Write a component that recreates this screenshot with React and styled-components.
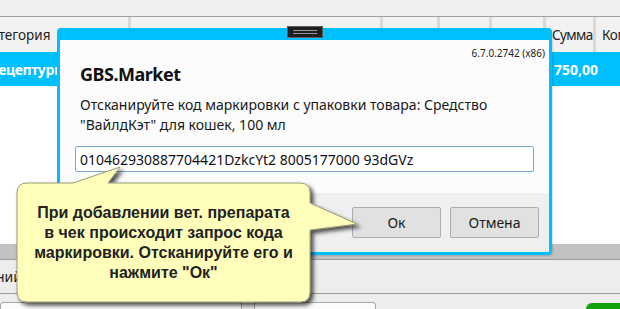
import styled, { createGlobalStyle } from "styled-components";

const GlobalStyle = createGlobalStyle`
  html, body {
    margin: 0;
    padding: 0;
    overflow: hidden;
  }
  body {
    font-family: "Noto Sans", "Open Sans", sans-serif;
  }
`;

const Screen = styled.div`
  position: relative;
  width: 620px;
  height: 309px;
  display: flex;
  flex-direction: column;
  background: #ffffff;
  overflow: hidden;
  font-family: "Noto Sans", sans-serif;
`;

const TopBar = styled.div`
  height: 16px;
  background: #f0f0f0;
  border-bottom: 1px solid #a0a0a0;
`;

const Row = styled.div`
  display: flex;
  height: ${(p) => p.$h}px;
  background: ${(p) => p.$bg};
  color: ${(p) => p.$color};
  font-weight: ${(p) => (p.$bold ? 700 : 400)};
  font-size: ${(p) => p.$size || 14}px;
`;

const Cell = styled.div`
  width: ${(p) => p.$w}px;
  flex: ${(p) => (p.$grow ? 1 : "none")};
  display: flex;
  align-items: center;
  overflow: hidden;
  white-space: nowrap;
  padding-left: ${(p) => p.$pad || 0}px;
  box-sizing: border-box;
  border-right: ${(p) => (p.$divider ? "3px solid #d9d9d9" : "none")};
`;

const Shift = styled.span`
  margin-left: ${(p) => p.$x}px;
  letter-spacing: ${(p) => p.$ls || 0}px;
`;

const Empty = styled.div`
  flex: 1;
  background: #ffffff;
`;

const Splitter = styled.div`
  height: 15px;
  background: #c2c2c2;
  border-bottom: 1px solid #9a9a9a;
`;

const BottomPanel = styled.div`
  height: 33px;
  background: #ededed;
  border-bottom: 1px solid #9c9c9c;
  display: flex;
  align-items: center;
  font-size: 14px;
  color: #222;
`;

const BottomBar = styled.div`
  flex: none;
  height: 15px;
  background: #ededed;
  display: flex;
  align-items: flex-end;
  gap: 12px;
`;

const Field = styled.div`
  height: 6px;
  width: ${(p) => p.$w}px;
  background: #fbfbfb;
  border: 1px solid #a8a8a8;
  border-bottom: none;
  border-radius: 4px 4px 0 0;
`;

const GreenBtn = styled.div`
  margin-left: auto;
  width: 34px;
  height: 6px;
  background: #13a10e;
  border-radius: 6px 0 0 0;
`;

/* modal dialog */
const Dialog = styled.div`
  position: absolute;
  left: 57px;
  top: 28px;
  width: 489px;
  height: 212px;
  border: 3px solid #00bfff;
  border-top-width: 12px;
  border-radius: 4px;
  background: #fcfcfc;
  display: flex;
  flex-direction: column;
  box-shadow: 1px 1px 2px rgba(0, 0, 0, 0.15);
`;

const Handle = styled.div`
  position: absolute;
  left: 227px;
  top: -14px;
  width: 34px;
  height: 10px;
  background: #1e1e1e;
  border: 1px solid #5c5c5c;
  display: flex;
  flex-direction: column;
  justify-content: center;
  align-items: center;
  gap: 2px;
`;

const HandleLine = styled.div`
  width: 24px;
  height: 1px;
  background: #9a9a9a;
`;

const DialogBody = styled.div`
  flex: 1;
  padding: 6px 4px 0 15px;
  display: flex;
  flex-direction: column;
`;

const Version = styled.div`
  align-self: flex-end;
  font-size: 10px;
  line-height: 14px;
  color: #222;
`;

const Title = styled.div`
  margin: 1px 0 0 5px;
  font-size: 18px;
  line-height: 26px;
  letter-spacing: -0.5px;
  font-weight: 700;
  color: #111;
`;

const Message = styled.div`
  margin: 8px 0 0 5px;
  font-size: 14px;
  line-height: 20px;
  color: #1a1a1a;
`;

const CodeInput = styled.div`
  margin-top: 11px;
  width: 459px;
  height: 26px;
  box-sizing: border-box;
  border: 1px solid #7aa7d8;
  border-radius: 2px;
  background: #ffffff;
  padding-left: 4px;
  display: flex;
  align-items: center;
  font-size: 14px;
  color: #111;
  white-space: nowrap;
`;

const Footer = styled.div`
  height: 59px;
  background: #f0f0f0;
  display: flex;
  justify-content: flex-end;
  align-items: flex-start;
  gap: 9px;
  padding: 14px 10px 0 0;
  box-sizing: border-box;
`;

const Button = styled.div`
  width: 89px;
  height: 31px;
  box-sizing: border-box;
  border: 1px solid #adadad;
  border-radius: 2px;
  background: #e1e1e1;
  display: flex;
  align-items: center;
  justify-content: center;
  font-size: 14px;
  color: #1a1a1a;
`;

/* callout hint */
const Callout = styled.div`
  position: absolute;
  left: 0;
  top: 160px;
  width: 370px;
  height: 149px;
`;

const CalloutShape = styled.svg`
  position: absolute;
  left: 0;
  top: 0;
`;

const CalloutText = styled.div`
  position: absolute;
  left: 17px;
  top: 23px;
  width: 293px;
  height: 119px;
  display: flex;
  align-items: center;
  justify-content: center;
  text-align: center;
  font-family: "Liberation Sans", Arial, sans-serif;
  font-weight: 700;
  font-size: 16px;
  line-height: 20px;
  color: #222;
`;

const columns = [131, 252, 57, 52, 54, 50];

export default function App() {
  return (
    <>
      <GlobalStyle />
      <Screen>
        <TopBar />
        <Row $h={35} $bg="#f2f2f2" $color="#222" $size={13.5}>
          {columns.map((w, i) => (
            <Cell key={i} $w={w} $divider>
              {i === 0 && <Shift $x={-17}>Категория</Shift>}
              {i === 5 && (
                <Shift $x={6} $ls={-0.6}>
                  Сумма
                </Shift>
              )}
            </Cell>
          ))}
          <Cell $grow $pad={6}>
            <Shift $x={0} $ls={-0.4}>Комментарий</Shift>
          </Cell>
        </Row>
        <Row $h={34} $bg="#00bfff" $color="#ffffff" $bold>
          <Cell $w={131}>
            <Shift $x={-10} $ls={-0.4}>Рецептурные</Shift>
          </Cell>
          <Cell $w={415} />
          <Cell $w={74} $pad={8}>750,00</Cell>
        </Row>
        <Empty />
        <Splitter />
        <BottomPanel>
          <Shift $x={-4}>ний</Shift>
        </BottomPanel>
        <BottomBar>
          <Field $w={240} />
          <Field $w={120} />
          <GreenBtn />
        </BottomBar>

        <Dialog>
          <Handle>
            <HandleLine />
            <HandleLine />
          </Handle>
          <DialogBody>
            <Version>6.7.0.2742 (x86)</Version>
            <Title>GBS.Market</Title>
            <Message>
              Отсканируйте код маркировки с упаковки товара: Средство
              <br />
              "ВайлдКэт" для кошек, 100 мл
            </Message>
            <CodeInput>010462930887704421DzkcYt2 8005177000 93dGVz</CodeInput>
          </DialogBody>
          <Footer>
            <Button>Ок</Button>
            <Button>Отмена</Button>
          </Footer>
        </Dialog>

        <Callout>
          <CalloutShape width="370" height="149" viewBox="0 0 370 149">
            <defs>
              <filter id="sh" x="-10%" y="-10%" width="130%" height="130%">
                <feDropShadow dx="3" dy="3" stdDeviation="2" floodColor="#000" floodOpacity="0.7" />
              </filter>
            </defs>
            <path
              d="M27 23 H73 L120 7 L108 23 H300 Q310 23 310 33 V43 L357 64 L310 70 V132 Q310 142 300 142 H27 Q17 142 17 132 V33 Q17 23 27 23 Z"
              fill="#ffffbb"
              stroke="#9a9a78"
              strokeWidth="1"
              filter="url(#sh)"
            />
          </CalloutShape>
          <CalloutText>
            При добавлении вет. препарата
            <br />
            в чек происходит запрос кода
            <br />
            маркировки. Отсканируйте его и
            <br />
            нажмите "Ок"
          </CalloutText>
        </Callout>
      </Screen>
    </>
  );
}
